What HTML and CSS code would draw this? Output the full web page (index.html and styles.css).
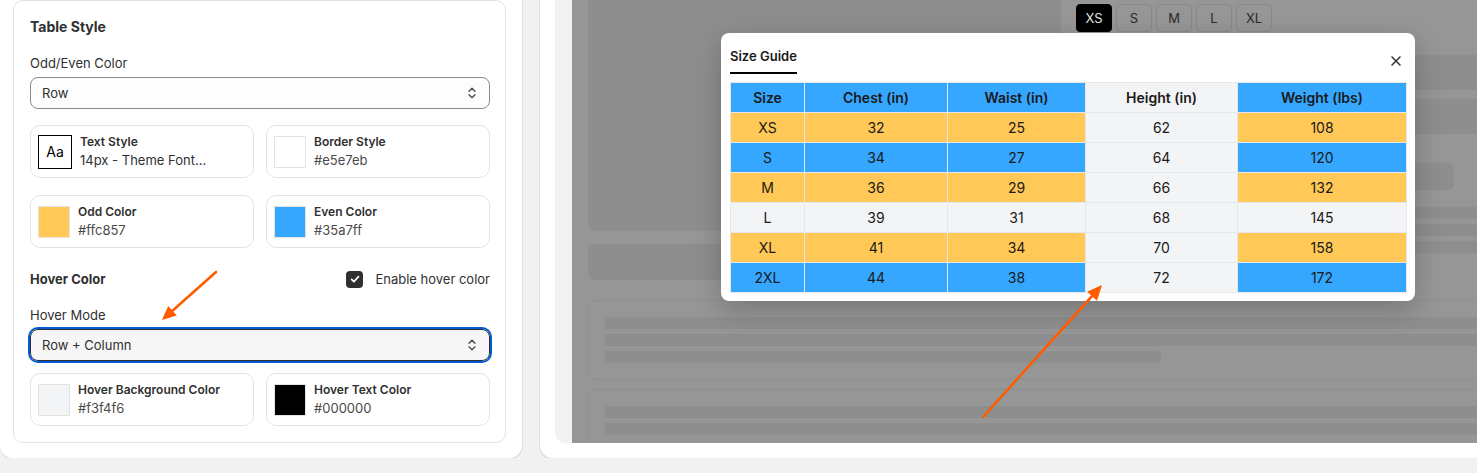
FILE: index.html
```html
<!DOCTYPE html>
<html>
<head>
    <meta charset="UTF-8">
    <title>Table Style</title>
    <link rel="stylesheet" href="styles.css">
</head>
<body>

<div class="page">
    <aside class="panel">
        <div class="panel-box">
            <h2 class="section-title">Table Style</h2>

            <div class="field-label">Odd/Even Color</div>
            <div class="select">
                <span>Row</span>
                <svg class="chevrons" width="20" height="20" viewBox="0 0 20 20"><path d="M7 8.2l3-3 3 3M7 11.8l3 3 3-3" fill="none" stroke="#4a4a4a" stroke-width="1.3" stroke-linecap="round" stroke-linejoin="round"/></svg>
            </div>

            <div class="card-grid">
                <div class="opt-card">
                    <div class="aa">Aa</div>
                    <div class="opt-text">
                        <div class="opt-title">Text Style</div>
                        <div class="opt-value dark">14px - Theme Font...</div>
                    </div>
                </div>
                <div class="opt-card">
                    <div class="swatch sw-border"></div>
                    <div class="opt-text">
                        <div class="opt-title">Border Style</div>
                        <div class="opt-value">#e5e7eb</div>
                    </div>
                </div>
                <div class="opt-card">
                    <div class="swatch sw-odd"></div>
                    <div class="opt-text">
                        <div class="opt-title">Odd Color</div>
                        <div class="opt-value">#ffc857</div>
                    </div>
                </div>
                <div class="opt-card">
                    <div class="swatch sw-even"></div>
                    <div class="opt-text">
                        <div class="opt-title">Even Color</div>
                        <div class="opt-value">#35a7ff</div>
                    </div>
                </div>
            </div>

            <div class="hover-head">
                <h3 class="sub-title">Hover Color</h3>
                <div class="check">
                    <span class="check-box">
                        <svg width="16" height="16" viewBox="0 0 16 16"><path d="M4.6 8.3l2.3 2.3 4.6-5" fill="none" stroke="#fff" stroke-width="1.7" stroke-linecap="round" stroke-linejoin="round"/></svg>
                    </span>
                    Enable hover color
                </div>
            </div>

            <div class="field-label">Hover Mode</div>
            <div class="select focused">
                <span>Row + Column</span>
                <svg class="chevrons" width="20" height="20" viewBox="0 0 20 20"><path d="M7 8.2l3-3 3 3M7 11.8l3 3 3-3" fill="none" stroke="#4a4a4a" stroke-width="1.3" stroke-linecap="round" stroke-linejoin="round"/></svg>
            </div>

            <div class="card-grid last">
                <div class="opt-card">
                    <div class="swatch sw-hover-bg"></div>
                    <div class="opt-text">
                        <div class="opt-title">Hover Background Color</div>
                        <div class="opt-value">#f3f4f6</div>
                    </div>
                </div>
                <div class="opt-card">
                    <div class="swatch sw-black"></div>
                    <div class="opt-text">
                        <div class="opt-title">Hover Text Color</div>
                        <div class="opt-value">#000000</div>
                    </div>
                </div>
            </div>
        </div>
    </aside>

    <section class="preview-card">
        <div class="preview">
            <div class="stage">
                <div class="stage-top">
                    <div class="left-col">
                        <div class="media"></div>
                        <div class="sk-bar-lg"></div>
                    </div>
                    <div class="right-col">
                        <div class="sizes">
                            <div class="size active">XS</div>
                            <div class="size">S</div>
                            <div class="size">M</div>
                            <div class="size">L</div>
                            <div class="size">XL</div>
                        </div>
                        <div class="sk-block"></div>
                        <div class="sk-block second"></div>
                        <div class="sk-button"></div>
                        <div class="sk-lines">
                            <div class="sk-line"></div>
                            <div class="sk-line"></div>
                            <div class="sk-line"></div>
                        </div>
                    </div>
                </div>

                <div class="sk-card">
                    <div class="sk-line"></div>
                    <div class="sk-line"></div>
                    <div class="sk-line short"></div>
                </div>
                <div class="sk-card">
                    <div class="sk-line"></div>
                    <div class="sk-line"></div>
                </div>

                <div class="modal">
                    <div class="modal-head">
                        <div class="tab">Size Guide</div>
                        <svg class="close" width="12" height="12" viewBox="0 0 12 12"><path d="M2 2l8 8M10 2l-8 8" stroke="#303030" stroke-width="1.5" stroke-linecap="round"/></svg>
                    </div>
                    <table class="size-table">
                        <colgroup>
                            <col style="width: 74px">
                            <col style="width: 143px">
                            <col style="width: 138px">
                            <col style="width: 152px">
                            <col style="width: 169px">
                        </colgroup>
                        <tr class="head">
                            <th class="even">Size</th>
                            <th class="even">Chest (in)</th>
                            <th class="even">Waist (in)</th>
                            <th class="hover">Height (in)</th>
                            <th class="even">Weight (lbs)</th>
                        </tr>
                        <tr class="odd"><td>XS</td><td>32</td><td>25</td><td class="hover">62</td><td>108</td></tr>
                        <tr class="even"><td>S</td><td>34</td><td>27</td><td class="hover">64</td><td>120</td></tr>
                        <tr class="odd"><td>M</td><td>36</td><td>29</td><td class="hover">66</td><td>132</td></tr>
                        <tr class="hover"><td>L</td><td>39</td><td>31</td><td class="hover">68</td><td>145</td></tr>
                        <tr class="odd"><td>XL</td><td>41</td><td>34</td><td class="hover">70</td><td>158</td></tr>
                        <tr class="even"><td>2XL</td><td>44</td><td>38</td><td class="hover">72</td><td>172</td></tr>
                    </table>
                </div>
            </div>
        </div>
    </section>
</div>

<svg class="arrows" width="1477" height="473" viewBox="0 0 1477 473">
    <line x1="216" y1="272" x2="172.5" y2="310.7" stroke="#ff5c00" stroke-width="2.6" stroke-linecap="round"/>
    <polygon points="162,320 176.8,315.4 168.2,305.9" fill="#ff5c00"/>
    <line x1="983" y1="417" x2="1092" y2="296.1" stroke="#ff5c00" stroke-width="2.6" stroke-linecap="round"/>
    <polygon points="1102,285 1097,300.7 1087.2,291.7" fill="#ff5c00"/>
</svg>

</body>
</html>
```

FILE: styles.css
```css
body {
    margin: 0;
    background: #f1f1f1;
    font-family: Inter, "Noto Sans", Arial, sans-serif;
    color: #303030;
    overflow: hidden;
}

.page {
    display: flex;
    align-items: flex-start;
    gap: 18px;
    width: 1540px;
    margin-top: -20px;
}

/* left settings panel */

.panel {
    width: 522px;
    box-sizing: border-box;
    background: #fff;
    border-radius: 0 0 12px 12px;
    padding: 20px 16px 15px 13px;
    box-shadow: 0 1px 0 rgba(0, 0, 0, 0.13), 1px 0 0 rgba(0, 0, 0, 0.06);
}

.panel-box {
    border: 1px solid #e3e3e3;
    border-radius: 10px;
    padding: 16px 15px 16px 16px;
}

.section-title {
    margin: 0;
    font-size: 14px;
    line-height: 20px;
    font-weight: 650;
}

.sub-title {
    margin: 0;
    font-size: 13px;
    line-height: 20px;
    font-weight: 650;
}

.field-label {
    margin-top: 16px;
    font-size: 13px;
    line-height: 20px;
}

.select {
    margin-top: 4px;
    height: 32px;
    box-sizing: border-box;
    border: 1px solid #8a8a8a;
    border-radius: 8px;
    background: #fdfdfd;
    display: flex;
    align-items: center;
    justify-content: space-between;
    padding: 0 7px 0 11px;
    font-size: 13px;
}

.select.focused {
    border-color: #303030;
    background: #f6f6f6;
    outline: 2px solid #005bd3;
    outline-offset: 0;
}

.card-grid {
    margin-top: 16px;
    display: grid;
    grid-template-columns: 1fr 1fr;
    gap: 17px 12px;
}

.card-grid.last {
    margin-top: 12px;
}

.opt-card {
    height: 53px;
    box-sizing: border-box;
    border: 1px solid #e3e3e3;
    border-radius: 10px;
    display: flex;
    align-items: center;
    gap: 8px;
    padding: 0 8px 0 7px;
}

.aa {
    width: 34px;
    height: 34px;
    box-sizing: border-box;
    border: 1px solid #000;
    display: flex;
    align-items: center;
    justify-content: center;
    font-size: 14px;
    color: #000;
}

.swatch {
    width: 32px;
    height: 32px;
    box-sizing: border-box;
    border: 1px solid #e3e3e3;
}

.sw-border { background: #fff; }
.sw-odd { background: #ffc857; }
.sw-even { background: #35a7ff; }
.sw-hover-bg { background: #f3f4f6; }
.sw-black { background: #000; }

.opt-title {
    font-size: 12px;
    line-height: 16px;
    font-weight: 600;
    color: #303030;
}

.opt-value {
    font-size: 13px;
    line-height: 20px;
    color: #4a4a4a;
}

.opt-value.dark {
    color: #303030;
}

.hover-head {
    margin-top: 21px;
    display: flex;
    justify-content: space-between;
    align-items: center;
    height: 20px;
}

.check {
    display: flex;
    align-items: center;
    gap: 12px;
    font-size: 13px;
}

.check-box {
    width: 17px;
    height: 17px;
    border-radius: 4px;
    background: #303030;
    display: flex;
    align-items: center;
    justify-content: center;
}

/* right preview */

.preview-card {
    flex: 1;
    background: #fff;
    border-radius: 0 0 12px 12px;
    padding: 20px 0 15px 15px;
    box-shadow: 0 1px 0 rgba(0, 0, 0, 0.13), -1px 0 0 rgba(0, 0, 0, 0.06);
}

.preview {
    background: #f1f2f2;
    border-radius: 0 0 0 10px;
    padding-left: 17px;
    overflow: hidden;
}

.stage {
    position: relative;
    height: 443px;
    background: #969696;
    padding-left: 16px;
    overflow: hidden;
}

.stage-top {
    display: flex;
    height: 280px;
}

.left-col {
    width: 473px;
}

.media {
    height: 231px;
    background: #8e8e8e;
    border-radius: 0 0 8px 8px;
}

.sk-bar-lg {
    margin-top: 13px;
    height: 36px;
    background: #8e8e8e;
    border-radius: 6px;
}

.right-col {
    flex: 1;
    padding-left: 15px;
}

.sizes {
    display: flex;
    gap: 4px;
    margin-top: 4px;
}

.size {
    width: 36px;
    height: 28px;
    box-sizing: border-box;
    border: 1px solid #8a8a8a;
    border-radius: 4px;
    display: flex;
    align-items: center;
    justify-content: center;
    font-size: 13px;
    color: #2a2a2a;
}

.size.active {
    background: #000;
    border-color: #000;
    color: #e6e6e6;
}

.sk-block {
    margin-top: 23px;
    height: 35px;
    background: #8e8e8e;
}

.sk-block.second {
    margin-top: 9px;
}

.sk-button {
    margin-top: 29px;
    width: 378px;
    height: 27px;
    background: #8e8e8e;
    border-radius: 6px;
}

.sk-lines {
    margin-top: 17px;
}

.sk-line {
    height: 12px;
    background: #8e8e8e;
    border-radius: 3px;
    margin-bottom: 5px;
}

.sk-line.short {
    width: 556px;
}

.sk-card {
    margin-top: 20px;
    border: 1px solid #8f8f8f;
    border-radius: 8px;
    padding: 16px 16px 11px 16px;
}

.sk-card + .sk-card {
    margin-top: 9px;
}

/* size guide modal */

.modal {
    position: absolute;
    left: 149px;
    top: 33px;
    width: 694px;
    height: 268px;
    box-sizing: border-box;
    background: #fff;
    border-radius: 8px;
    padding: 0 9px 9px;
    box-shadow: 0 8px 28px rgba(0, 0, 0, 0.22);
}

.modal-head {
    display: flex;
    justify-content: space-between;
    align-items: flex-start;
    height: 49px;
}

.tab {
    margin-top: 13px;
    padding-bottom: 6px;
    border-bottom: 2px solid #000;
    font-size: 13px;
    line-height: 20px;
    font-weight: 600;
    color: #1a1a1a;
}

.close {
    margin-right: 4px;
    margin-top: 22px;
}

.size-table {
    width: 676px;
    border-collapse: collapse;
    table-layout: fixed;
    font-size: 14px;
    color: #1a1a1a;
}

.size-table th,
.size-table td {
    height: 29px;
    padding: 0;
    text-align: center;
    border: 1px solid #e5e7eb;
}

.size-table th {
    font-weight: 600;
}

.size-table .odd td { background: #ffc857; }
.size-table .even td,
.size-table th.even { background: #35a7ff; }
.size-table tr.hover td,
.size-table .hover { background: #f3f4f6; }

.size-table tr.odd td.hover,
.size-table tr.even td.hover { background: #f3f4f6; }

/* annotation arrows */

.arrows {
    position: absolute;
    top: 0;
    left: 0;
    pointer-events: none;
}
```
